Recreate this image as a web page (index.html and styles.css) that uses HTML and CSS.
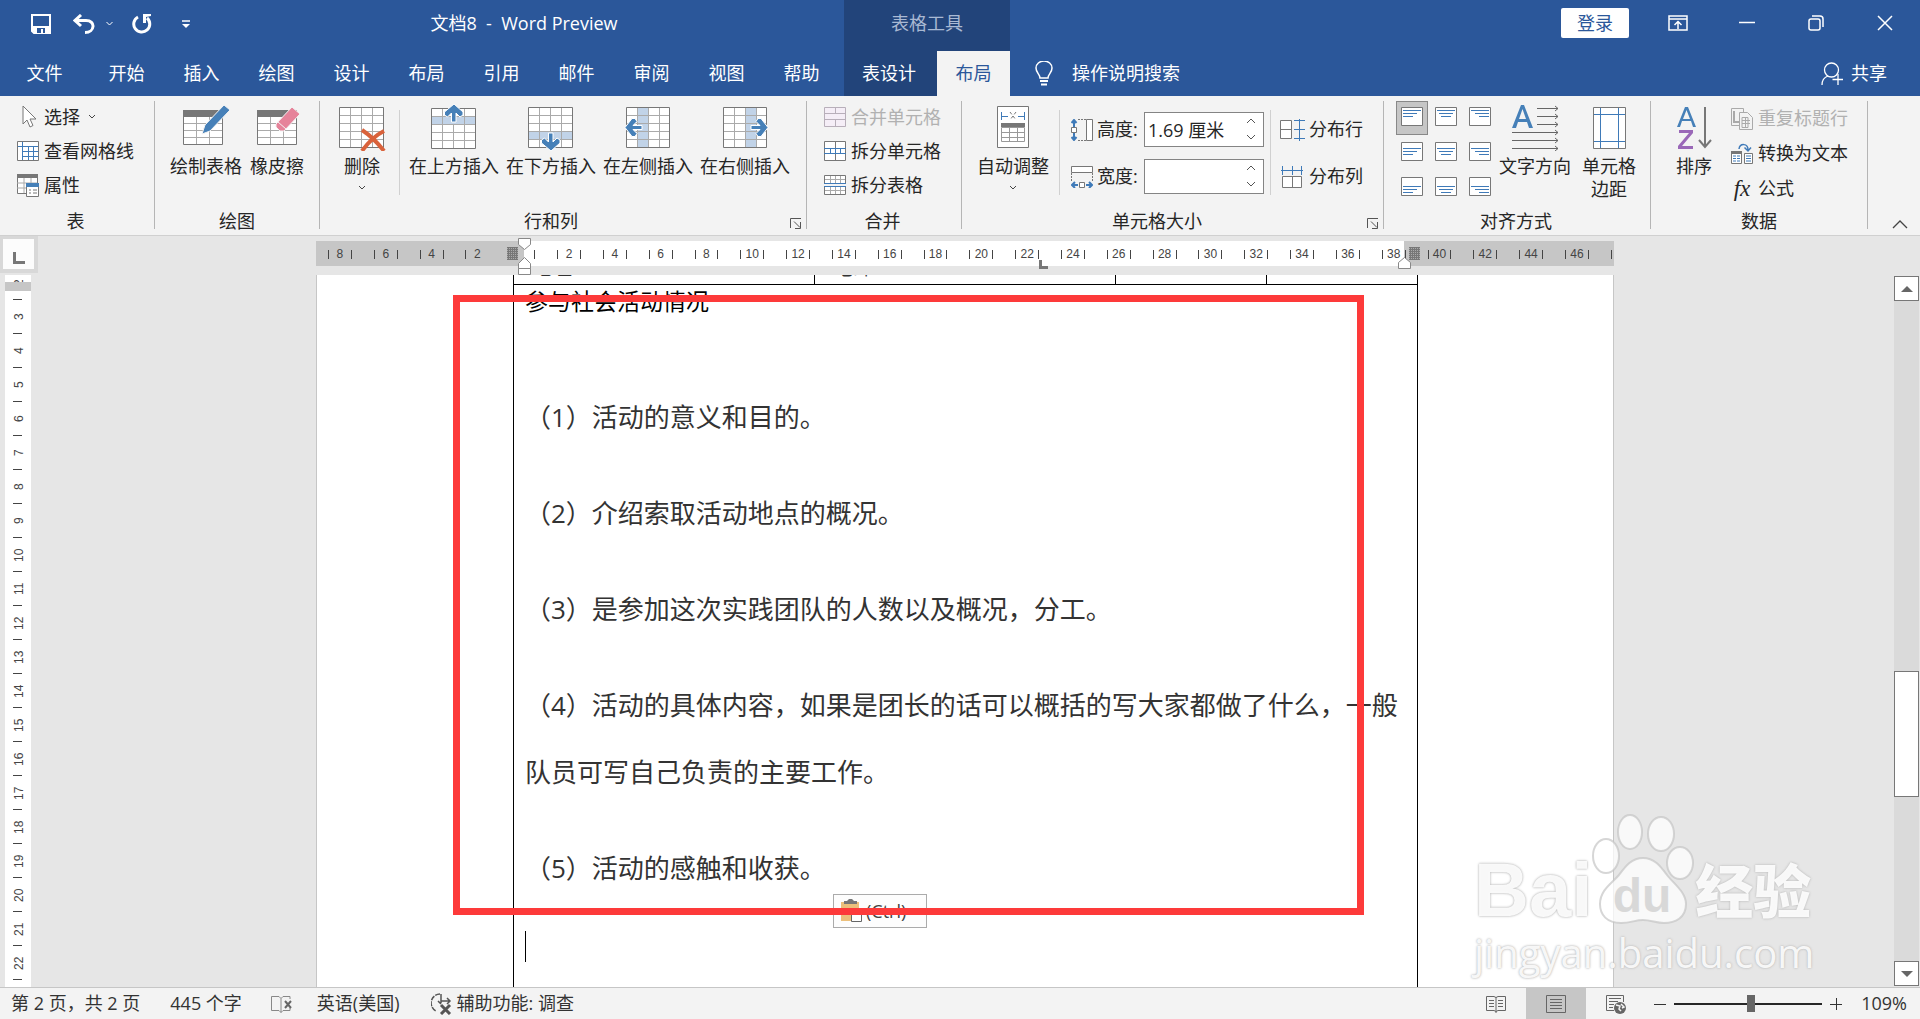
FILE: index.html
```html
<!DOCTYPE html>
<html lang="zh-CN">
<head>
    <meta charset="UTF-8">
    <title>文档8 - Word Preview</title>
    <link rel="stylesheet" href="styles.css">
</head>
<body>
    <header class="header">
        <div class="title-row">
            <div class="quick">
                <button class="q-save" aria-label="保存"><svg width="20" height="20" viewBox="0 0 20 20"><path d="M1 1h18v18H3l-2-2z" fill="none" stroke="#fff" stroke-width="2"/><path d="M2 12h16v7H4l-2-2z" fill="#fff"/><path d="M6 14h8v5h-2v-4h-2v4H6z" fill="#2b579a"/></svg></button>
                <button class="q-undo" aria-label="撤消"><svg width="22" height="20" viewBox="0 0 22 20"><path d="M8 1L2 6.500l6 5.500M3 6.500h10c10 0 9 12-1 12" fill="none" stroke="#fff" stroke-width="3"/></svg></button>
                <button class="q-down" aria-label="撤消列表"><svg width="7" height="5" viewBox="0 0 7 5"><path d="M.5 1l3 3 3-3" fill="none" stroke="#fff"/></svg></button>
                <button class="q-redo" aria-label="重复"><svg width="20" height="20" viewBox="0 0 20 20"><path d="M6 3a8 8 0 1 0 9 1" fill="none" stroke="#fff" stroke-width="3"/><path d="M11 0h8v2l-5 1v6h-3z" fill="#fff"/></svg></button>
                <button class="q-more" aria-label="自定义"><svg width="8" height="8" viewBox="0 0 8 8"><path d="M0 1h8" stroke="#fff" stroke-width="1.500"/><path d="M0 4h8L4 8z" fill="#fff"/></svg></button>
            </div>
            <div class="doc-title">文档8 &nbsp;-&nbsp; Word Preview</div>
        </div>
        <div class="context-title">表格工具</div>
        <div class="window-row">
            <button class="login">登录</button>
            <button class="win" aria-label="功能区显示选项"><svg width="20" height="16" viewBox="0 0 20 16"><path d="M1 1h18v14H1zM1 4h18" fill="none" stroke="#fff" stroke-width="1.500"/><path d="M10 14V7M6.500 10L10 6.500l3.500 3.500" fill="none" stroke="#fff" stroke-width="1.500"/></svg></button>
            <button class="win" aria-label="最小化"><svg width="16" height="16" viewBox="0 0 16 16"><path d="M0 7.500h16" stroke="#fff" stroke-width="1.500"/></svg></button>
            <button class="win" aria-label="还原"><svg width="16" height="16" viewBox="0 0 16 16"><rect x="1" y="4" width="11" height="11" rx="2" fill="none" stroke="#fff" stroke-width="1.500"/><path d="M4 1h8q3 0 3 3v8" fill="none" stroke="#fff" stroke-width="1.500"/></svg></button>
            <button class="win" aria-label="关闭"><svg width="16" height="16" viewBox="0 0 16 16"><path d="M1 1l14 14M15 1L1 15" stroke="#fff" stroke-width="1.500"/></svg></button>
        </div>
        <nav class="tabs">
            <button class="tab tab-file">文件</button>
            <button class="tab">开始</button>
            <button class="tab">插入</button>
            <button class="tab">绘图</button>
            <button class="tab">设计</button>
            <button class="tab">布局</button>
            <button class="tab">引用</button>
            <button class="tab">邮件</button>
            <button class="tab">审阅</button>
            <button class="tab">视图</button>
            <button class="tab">帮助</button>
        </nav>
        <nav class="context-tabs">
            <button class="tab">表设计</button>
            <button class="tab active">布局</button>
        </nav>
        <div class="search-row">
            <button class="tell-me"><svg width="18" height="25" viewBox="0 0 18 25"><path d="M5 17c0-4-4-5-4-10a8 7 0 0 1 16 0c0 5-4 6-4 10z" fill="none" stroke="#fff" stroke-width="1.500"/><path d="M5 20h8M6 23.500h6" stroke="#fff" stroke-width="2"/></svg>操作说明搜索</button>
            <button class="share"><svg width="23" height="24" viewBox="0 0 23 24"><circle cx="10.500" cy="8" r="7" fill="none" stroke="#fff" stroke-width="1.300"/><path d="M1 23c0-5 3-8 6-9M17 12v11M11.500 17.500H22" fill="none" stroke="#fff" stroke-width="1.300"/></svg>共享</button>
        </div>
    </header>

    <section class="ribbon">
        <div class="group g-table">
            <div class="group-body">
                <div class="stack">
                    <button class="small"><svg width="22" height="24" viewBox="0 0 22 24"><path d="M6 1v18l4-4 3 7 3-1.500-3-6.500h6z" fill="#fff" stroke="#777"/></svg>选择<svg class="chev" width="8" height="6" viewBox="0 0 8 6"><path d="M1 1l3 3 3-3" fill="none" stroke="#444"/></svg></button>
                    <button class="small"><svg width="22" height="20" viewBox="0 0 22 20"><path d="M.5 .5h21v19H.5z" fill="#fff" stroke="#777"/><path d="M1 5.500h20M5.500 10.500h16M5.500 15.500h16M5.500 1v18M11.500 5v14M16.500 5v14" stroke="#3f7ab8"/></svg>查看网格线</button>
                    <button class="small"><svg width="22" height="23" viewBox="0 0 22 23"><path d="M.5 .5h20v19H.5z" fill="#fff" stroke="#777"/><path d="M0 0h21v4H0z" fill="#777"/><path d="M0 9h20M0 14h10M7 4v15M14 4v5" stroke="#aaa"/><path d="M9.500 9.500h12v13h-12z" fill="#fff" stroke="#777"/><path d="M9 9h13v4H9z" fill="#4680b8"/><path d="M12 16h2m2 0h4M12 19h2m2 0h4" stroke="#777"/></svg>属性</button>
                </div>
            </div>
            <div class="group-label">表</div>
        </div>

        <div class="group g-draw">
            <div class="group-body">
                <button class="big"><svg width="48" height="48" viewBox="0 0 48 48"><path d="M1.500 7.500h39v34h-39z" fill="#fff" stroke="#777"/><path d="M1 7h40v7H1z" fill="#777"/><path d="M2 20.500h38M2 27.500h38M2 34.500h38M14.500 14v27M27.500 14v27" stroke="#aaa"/><path d="M20 31l3-9L42 2l6 5-20 21z" fill="#4680b8" stroke="#f3f3f3"/></svg>绘制表格</button>
                <button class="big"><svg width="48" height="48" viewBox="0 0 48 48"><path d="M4.500 7.500h39v34h-39z" fill="#fff" stroke="#777"/><path d="M4 7h40v7H4z" fill="#777"/><path d="M5 20.500h38M5 27.500h38M5 34.500h38M17.500 14v27M30.500 14v27" stroke="#aaa"/><path d="M23 21L39 4l8 7-16 17h-4l-4-4z" fill="#e6839a" stroke="#f3f3f3"/><path d="M25 19l8 7" stroke="#f3f3f3"/></svg>橡皮擦</button>
            </div>
            <div class="group-label">绘图</div>
        </div>

        <div class="group g-rows">
            <div class="group-body">
                <button class="big"><svg width="48" height="48" viewBox="0 0 48 48"><path d="M1.500 4.500h44v40h-44z" fill="#fff" stroke="#777"/><path d="M2 12.500h43M2 20.500h43M2 28.500h43M2 36.500h43M12.500 5v39M23.500 5v39M34.500 5v39" stroke="#aaa"/><path d="M24 27q12 8 22 21M46 28Q34 34 24 48" fill="none" stroke="#d9623b" stroke-width="4"/></svg>删除<svg class="chev" width="8" height="6" viewBox="0 0 8 6"><path d="M1 1l3 3 3-3" fill="none" stroke="#444"/></svg></button>
                <span class="thin-line line-del"></span>
                <div class="insert-list">
                    <button class="big"><svg width="48" height="48" viewBox="0 0 48 48"><path d="M1.500 5.500h44v40h-44z" fill="#fff" stroke="#777"/><path d="M2 13h43v8H2z" fill="#c1d3e8"/><path d="M2 13.500h43M2 21.500h43M2 29.500h43M2 37.500h43M12.500 6v39M23.500 6v7M23.500 21v24M34.500 6v39" stroke="#aaa"/><path d="M21.500 19v-9l-4 4-3-2V9L24 1l9 8v3l-3 2-4-4v9z" fill="#4680b8" stroke="#fff"/></svg>在上方插入</button>
                    <button class="big"><svg width="48" height="48" viewBox="0 0 48 48"><path d="M1.500 4.500h44v40h-44z" fill="#fff" stroke="#777"/><path d="M2 28h43v8H2z" fill="#c1d3e8"/><path d="M2 12.500h43M2 20.500h43M2 28.500h43M2 36.500h43M12.500 5v39M23.500 5v23M34.500 5v39" stroke="#aaa"/><path d="M21.500 30v9l-4-4-3 2v3l9.500 8 9-8v-3l-3-2-4 4v-9z" fill="#4680b8" stroke="#fff"/></svg>在下方插入</button>
                    <button class="big"><svg width="48" height="48" viewBox="0 0 48 48"><path d="M2.500 4.500h43v40h-43z" fill="#fff" stroke="#777"/><path d="M13 5h11v39H13z" fill="#c1d3e8"/><path d="M3 12.500h42M3 20.500h42M3 28.500h42M3 36.500h42M13.500 5v39M24.500 5v39M35.500 5v39" stroke="#aaa"/><path d="M18 22.500H9l4-4-2-3H8l-7 9 7 9h3l2-3-4-4h9z" fill="#4680b8" stroke="#fff"/></svg>在左侧插入</button>
                    <button class="big"><svg width="48" height="48" viewBox="0 0 48 48"><path d="M2.500 4.500h43v40h-43z" fill="#fff" stroke="#777"/><path d="M24 5h11v39H24z" fill="#c1d3e8"/><path d="M3 12.500h42M3 20.500h42M3 28.500h42M3 36.500h42M13.500 5v39M24.500 5v39M35.500 5v39" stroke="#aaa"/><path d="M30 22.500h9l-4-4 2-3h3l7 9-7 9h-3l-2-3 4-4h-9z" fill="#4680b8" stroke="#fff"/></svg>在右侧插入</button>
                </div>
            </div>
            <div class="group-label">行和列</div>
            <button class="launcher" aria-label="表格属性"><svg width="12" height="11" viewBox="0 0 12 11"><path d="M.5 10V.5H11M4 3.500l6 6M10.500 4v6.500H5" fill="none" stroke="#555"/></svg></button>
        </div>

        <div class="group g-merge">
            <div class="group-body">
                <div class="stack">
                    <button class="small" disabled><svg width="22" height="20" viewBox="0 0 22 20"><path d="M.5 .5h21v19H.5zM0 6.500h22M0 12.500h22M11.500 0v6M11.500 13v7" fill="#f5eef7" stroke="#b8afba"/></svg>合并单元格</button>
                    <button class="small"><svg width="22" height="20" viewBox="0 0 22 20"><path d="M.5 .5h21v19H.5zM11.500 0v20" fill="#fff" stroke="#777"/><path d="M1 7h20v6H1z" fill="#fff"/><path d="M0 7.500h22M0 12.500h22M6.500 8v5M11.500 8v5M16.500 8v5" stroke="#3f7ab8"/></svg>拆分单元格</button>
                    <button class="small"><svg width="22" height="20" viewBox="0 0 22 20"><path d="M.5 8V.5h21V8M.5 12v7.500h21V12" fill="#fff" stroke="#777"/><path d="M1 4.500h20M1 15.500h20M6.500 1v7M11.500 1v7M16.500 1v7M6.500 12v7M11.500 12v7M16.500 12v7" stroke="#aaa"/><path d="M0 8.500h22M0 11.500h22" stroke="#3f7ab8"/></svg>拆分表格</button>
                </div>
            </div>
            <div class="group-label">合并</div>
        </div>

        <div class="group g-size">
            <div class="group-body">
                <button class="big"><svg width="48" height="48" viewBox="0 0 48 48"><path d="M8.500 3.500h31v41h-31z" fill="#fff" stroke="#777"/><path d="M12.500 9v8M35.500 9v8M13 13.500h6M29 13.500h6" stroke="#3f7ab8"/><path d="M21 9l6 8M27 9l-6 8" stroke="#777" stroke-dasharray="3 2"/><path d="M12 20h24v4H12z" fill="#777"/><path d="M12.500 24.500h23v14h-23zM12 29.500h24M12 34.500h24M20.500 25v13M28.500 25v13" fill="none" stroke="#999"/></svg>自动调整<svg class="chev" width="8" height="6" viewBox="0 0 8 6"><path d="M1 1l3 3 3-3" fill="none" stroke="#444"/></svg></button>
                <span class="thin-line"></span>
                <div class="size-fields">
                    <div class="field">
                        <svg width="22" height="22" viewBox="0 0 22 22"><path d="M3 2v6M3 14v6M0.500 4L3 1l2.500 3M.5 18L3 21l2.500-3" fill="none" stroke="#3f7ab8" stroke-width="2"/><path d="M.5 8.500h5v5h-5zM15.500 .5h6v21h-6z" fill="#fff" stroke="#777"/><path d="M7 .5h8M7 21.500h8" stroke="#777" stroke-dasharray="2 1"/></svg>
                        <label for="row-height">高度:</label>
                        <span class="spin"><input id="row-height" type="text" value="1.69 厘米"><svg width="10" height="24" viewBox="0 0 10 24"><path d="M1 6l4-4 4 4M1 18l4 4 4-4" fill="none" stroke="#555"/></svg></span>
                    </div>
                    <div class="field">
                        <svg width="22" height="22" viewBox="0 0 22 22"><path d="M.5 .5h21v6H.5zM8.500 16.500h5v5h-5z" fill="#fff" stroke="#777"/><path d="M.5 7v8M21.500 7v8" stroke="#777" stroke-dasharray="2 1"/><path d="M1 19h6M15 19h6M4 16l-3 3 3 3M18 16l3 3-3 3" fill="none" stroke="#3f7ab8" stroke-width="2"/></svg>
                        <label for="col-width">宽度:</label>
                        <span class="spin"><input id="col-width" type="text" value=""><svg width="10" height="24" viewBox="0 0 10 24"><path d="M1 6l4-4 4 4M1 18l4 4 4-4" fill="none" stroke="#555"/></svg></span>
                    </div>
                </div>
                <span class="thin-line"></span>
                <div class="dist-list">
                    <button class="dist"><svg width="25" height="22" viewBox="0 0 25 22"><path d="M.5 1.500h11v18H.5zM0 10.500h12" fill="#fff" stroke="#777"/><path d="M19.500 0v22M14 1.500h11M14 10.500h11M14 19.500h11" stroke="#3f7ab8"/></svg>分布行</button>
                    <button class="dist"><svg width="25" height="22" viewBox="0 0 25 22"><path d="M2.500 10.500h19v11h-19zM12.500 10v12" fill="#fff" stroke="#777"/><path d="M1 4.500h22M2.500 0v9M12.500 0v9M21.500 0v9" stroke="#3f7ab8"/></svg>分布列</button>
                </div>
            </div>
            <div class="group-label">单元格大小</div>
            <button class="launcher" aria-label="表格属性"><svg width="12" height="11" viewBox="0 0 12 11"><path d="M.5 10V.5H11M4 3.500l6 6M10.500 4v6.500H5" fill="none" stroke="#555"/></svg></button>
        </div>

        <div class="group g-align">
            <div class="group-body">
                <div class="align-grid" id="alignGrid"></div>
                <button class="big"><svg width="48" height="48" viewBox="0 0 48 48"><path d="M1 25L10 2h3l9 23h-4l-2-6H7l-2 6zM8 16h7L11.500 6z" fill="#4680b8"/><path d="M26 5.500h21M26 13.500h21M26 21.500h21M1 29.500h46M1 37.500h46M1 45.500h46M44 3l3 2.500-3 2.500M44 11l3 2.500-3 2.500M44 19l3 2.500-3 2.500M44 27l3 2.500-3 2.500M44 35l3 2.500-3 2.500M44 43l3 2.500-3 2.500" fill="none" stroke="#666"/></svg>文字方向</button>
                <button class="big"><svg width="48" height="48" viewBox="0 0 48 48"><path d="M8.500 4.500h32v41h-32z" fill="#fff" stroke="#777"/><path d="M15.500 5v40M33.500 5v40M9 11.500h31M9 38.500h31" stroke="#3f7ab8"/></svg>单元格<br>边距</button>
            </div>
            <div class="group-label">对齐方式</div>
        </div>

        <div class="group g-data">
            <div class="group-body">
                <button class="big"><svg width="48" height="48" viewBox="0 0 48 48"><path d="M7 24L15 4h3l8 20h-3l-2-6h-9l-2 6zM13 16h7L16.500 7z" fill="#4680b8"/><path d="M9 27h14v3L12 43h11v3H8v-3l11-13H9z" fill="#9a68b8"/><path d="M35 4v40M29 37l6 7 6-7" fill="none" stroke="#777" stroke-width="2"/></svg>排序</button>
                <div class="stack">
                    <button class="small" disabled><svg width="22" height="22" viewBox="0 0 22 22"><path d="M.5 .5h12v17H.5z" fill="#f3f3f3" stroke="#aaa"/><path d="M3 3v11h5" fill="none" stroke="#aaa" stroke-width="2"/><path d="M8.500 4.500h8l5 5v12h-13z" fill="#f3f3f3" stroke="#aaa"/><path d="M11 9.500h6v10h-6zM11 12.500h8M11 15.500h8M14.500 9v10" fill="none" stroke="#aaa"/></svg>重复标题行</button>
                    <button class="small"><svg width="22" height="22" viewBox="0 0 22 22"><path d="M.5 8.500h10v12H.5zM13.500 10.500h8v10h-8z" fill="#fff" stroke="#777"/><path d="M0 8h11v3H0z" fill="#777"/><path d="M2 13h3m1 0h3M2 15.500h3m1 0h3M2 18h3m1 0h3M15 13h5M15 15.500h5M15 18h5" stroke="#3f7ab8"/><path d="M8 6c1-6 9-6 9 1M13.500 4.500L17 8l3-3.500" fill="none" stroke="#3f7ab8" stroke-width="1.500"/></svg>转换为文本</button>
                    <button class="small"><span class="fx">fx</span>公式</button>
                </div>
            </div>
            <div class="group-label">数据</div>
        </div>
        <button class="collapse" aria-label="折叠功能区"><svg width="16" height="9" viewBox="0 0 16 9"><path d="M1 8l7-7 7 7" fill="none" stroke="#444" stroke-width="1.300"/></svg></button>
    </section>

    <main class="workspace">
        <div class="tab-corner"><button class="tab-type" aria-label="制表符"></button></div>
        <div class="ruler-row">
            <div class="ruler">
                <div class="ruler-body"></div>
                <div class="ruler-units" id="hUnits"></div>
                <span class="hatch hatch-left"></span>
                <span class="hatch hatch-right"></span>
                <span class="tab-stop"></span>
                <svg class="indent indent-left" width="13" height="37" viewBox="0 0 13 37"><path d="M.5 .5h12v6l-6 5-6-5zM.5 30.500v-5l6-6 6 6v5zM.5 30.500h12v6H.5z" fill="#fff" stroke="#888"/></svg>
                <svg class="indent indent-right" width="13" height="12" viewBox="0 0 13 12"><path d="M.5 11.500v-6l6-5 6 5v6z" fill="#fff" stroke="#888"/></svg>
            </div>
        </div>
        <div class="v-ruler" id="vUnits"><span class="v-band"></span></div>
        <div class="canvas">
            <article class="page">
                <table class="doc-table">
                    <colgroup><col class="col-a"><col class="col-b"><col class="col-c"><col></colgroup>
                    <tr class="cut-row">
                        <td><div class="cut">地址</div></td>
                        <td><div class="cut">电邮</div></td>
                        <td></td>
                        <td></td>
                    </tr>
                    <tr>
                        <td colspan="4" class="content">
                            <h2>参与社会活动情况</h2>
                            <p>（1）活动的意义和目的。</p>
                            <p>（2）介绍索取活动地点的概况。</p>
                            <p>（3）是参加这次实践团队的人数以及概况，分工。</p>
                            <p>（4）活动的具体内容，如果是团长的话可以概括的写大家都做了什么，一般队员可写自己负责的主要工作。</p>
                            <p>（5）活动的感触和收获。</p>
                            <div class="caret"></div>
                        </td>
                    </tr>
                </table>
                <button class="paste"><svg width="22" height="24" viewBox="0 0 22 24"><path d="M0 3h18v19H0z" fill="#ecc07c"/><path d="M3 5V2h3l2-2h3l2 2h3v3z" fill="#777"/><path d="M10.500 9.500h10v13h-10z" fill="#fff" stroke="#666"/></svg>(Ctrl)</button>
                <div class="mark"></div>
            </article>
            <div class="watermark">
                <div class="wm-top">
                    <span class="wm-bai">Bai</span>
                    <svg class="wm-paw" width="106" height="112" viewBox="0 0 106 112"><g fill="#fff" fill-opacity=".75" stroke="#c4c4c4" stroke-opacity=".7" stroke-width="2"><ellipse cx="17" cy="43" rx="13" ry="17"/><ellipse cx="41" cy="19" rx="12" ry="17"/><ellipse cx="72" cy="21" rx="13" ry="17"/><ellipse cx="91" cy="50" rx="13" ry="16"/><path d="M54 45c12 0 18 9 24 17s19 17 19 29c0 14-11 19-22 19-8 0-13-3-21-3s-12 3-22 3c-14 0-21-8-21-19 0-14 12-21 19-29 6-8 12-17 24-17z"/></g><text x="53" y="99" text-anchor="middle" class="wm-du">du</text></svg>
                    <span class="wm-cn">经验</span>
                </div>
                <div class="wm-url">jingyan.baidu.com</div>
            </div>
        </div>
        <div class="scrollbar">
            <button aria-label="向上"><svg width="12" height="6" viewBox="0 0 12 6"><path d="M0 6l6-6 6 6z" fill="#666"/></svg></button>
            <div class="scroll-track"><div class="scroll-thumb"></div></div>
            <button aria-label="向下"><svg width="12" height="6" viewBox="0 0 12 6"><path d="M0 0l6 6 6-6z" fill="#666"/></svg></button>
        </div>
    </main>

    <footer class="status">
        <span class="st-page">第 2 页，共 2 页</span>
        <span class="st-words">445 个字</span>
        <svg class="st-proof" width="22" height="18" viewBox="0 0 22 18"><path d="M.5 1.500H8l2 2v14l-2-2H.5zM10 3.500l2-2h7V4M19 13v2.500h-7l-2 2" fill="none" stroke="#888"/><path d="M14 6l6 7M20 6l-6 7" stroke="#666" stroke-width="2"/></svg>
        <span class="st-lang">英语(美国)</span>
        <svg class="st-acc" width="21" height="22" viewBox="0 0 21 22"><path d="M9 1A9 9 0 0 0 5 18" fill="none" stroke="#555" stroke-width="1.500" stroke-dasharray="5 1"/><path d="M10 1v9M7 8l3 3M10 8h9M16 5l3 3-3 3" fill="none" stroke="#555" stroke-width="1.500"/><path d="M10 12l9 9M19 12l-9 9" stroke="#555" stroke-width="3"/></svg>
        <span>辅助功能: 调查</span>
        <div class="st-right">
            <button class="view" aria-label="阅读视图"><svg width="20" height="18" viewBox="0 0 20 18"><path d="M.5 1.500H8l2 1 2-1h7.500v14H12l-2 1-2-1H.5zM10 2v16M3 5.500h5M3 8.500h5M3 11.500h5M12 5.500h5M12 8.500h5M12 11.500h5" fill="none" stroke="#666"/></svg></button>
            <button class="view current" aria-label="页面视图"><svg width="20" height="18" viewBox="0 0 20 18"><path d="M.5 .5h19v17H.5zM4 4.500h12M4 7.500h12M4 10.500h12M4 13.500h12" fill="none" stroke="#666"/></svg></button>
            <button class="view" aria-label="Web 版式视图"><svg width="20" height="20" viewBox="0 0 20 20"><path d="M8 16.500H.5V1.500h17V8M3 4.500h12M3 7.500h9M3 10.500h5M3 13.500h4" fill="none" stroke="#666"/><circle cx="14" cy="14" r="6" fill="#666"/><path d="M10 11l4 1-1 3 2 2M15 10l3 3-2 1" fill="none" stroke="#f3f3f3" stroke-width="1.500"/></svg></button>
            <button class="zoom-btn" aria-label="缩小"><svg width="12" height="12" viewBox="0 0 12 12"><path d="M0 6.500h12" stroke="#333"/></svg></button>
            <input class="zoom" type="range" min="0" max="100" value="52" aria-label="缩放">
            <button class="zoom-btn" aria-label="放大"><svg width="12" height="12" viewBox="0 0 12 12"><path d="M0 6.500h12M6.500 0v12" stroke="#333"/></svg></button>
            <span class="zoom-value">109%</span>
        </div>
    </footer>
    <script src="script.js"></script>
</body>
</html>
```
FILE: styles.css
```css
* {
    box-sizing: border-box;
}
body {
    margin: 0;
    height: 100vh;
    display: flex;
    flex-direction: column;
    overflow: hidden;
    font-family: "Open Sans", "Noto Sans CJK SC", sans-serif;
    font-size: 18px;
    line-height: 23px;
    color: #262626;
    background-color: #e6e6e6;
}
button {
    padding: 0;
    border: none;
    background: none;
    font: inherit;
    color: inherit;
    white-space: nowrap;
    cursor: pointer;
}
svg {
    display: block;
    flex-shrink: 0;
}

/* title bar and tabs */
.header {
    display: grid;
    grid-template-columns: auto auto 1fr;
    grid-template-rows: 51px 45px;
    background-color: #2b579a;
    color: #fff;
}
.title-row {
    display: flex;
    align-items: center;
    padding-bottom: 4px;
}
.quick {
    display: flex;
    align-items: center;
    padding-left: 31px;
}
.q-save {
    margin-right: 22px;
}
.q-undo {
    margin-right: 11px;
}
.q-down {
    margin-right: 19px;
}
.q-redo {
    margin-right: 30px;
}
.doc-title {
    flex: 1;
    padding-left: 14px;
    text-align: center;
}
.context-title {
    display: flex;
    align-items: center;
    justify-content: center;
    padding-bottom: 4px;
    background-color: #22447a;
    color: #a9b9d3;
}
.window-row {
    display: flex;
    align-items: center;
    justify-content: flex-end;
    padding: 0 1px 5px 0;
}
.login {
    width: 68px;
    height: 30px;
    margin-right: 14px;
    border-radius: 2px;
    background-color: #fff;
    color: #2b579a;
}
.win {
    width: 69px;
    height: 46px;
    display: flex;
    align-items: center;
    justify-content: center;
}
.tabs {
    display: flex;
    padding-right: 5px;
}
.tab {
    min-width: 75px;
    padding: 0 17px;
}
.tab-file {
    width: 89px;
}
.context-tabs {
    display: flex;
    background-color: #22447a;
}
.context-tabs .tab {
    min-width: 73px;
    padding: 0 21px 0 18px;
}
.context-tabs .active {
    padding: 0 18px;
    background-color: #f3f3f3;
    color: #2b579a;
}
.search-row {
    display: flex;
    align-items: center;
    justify-content: space-between;
    padding: 0 33px 0 25px;
}
.tell-me {
    display: flex;
    align-items: center;
    gap: 19px;
}
.share {
    display: flex;
    align-items: center;
    gap: 7px;
}

/* ribbon */
.ribbon {
    display: flex;
    height: 140px;
    padding: 5px 0 6px;
    background-color: #f3f3f3;
    border-bottom: 1px solid #d0d0d0;
}
.group {
    position: relative;
    display: flex;
    flex-direction: column;
    border-right: 1px solid #b5b5b5;
}
.group-body {
    display: flex;
    flex: 1;
}
.group-label {
    line-height: 16px;
    text-align: center;
}
.g-rows .group-label, .g-size .group-label {
    padding-right: 26px;
}
.launcher {
    position: absolute;
    right: 4px;
    bottom: 0;
}
.big {
    display: flex;
    flex-direction: column;
    align-items: center;
    align-self: flex-start;
    padding-top: 2px;
}
.big > svg:first-child {
    margin-bottom: 4px;
}
.big .chev {
    margin-top: 7px;
}
.stack {
    display: flex;
    flex-direction: column;
    margin-top: -1px;
}
.small {
    display: flex;
    align-items: center;
    gap: 5px;
    height: 34px;
}
.small:disabled {
    color: #b1b1b1;
}
.small .chev {
    margin-left: 3px;
}
.thin-line {
    width: 1px;
    height: 85px;
    margin-top: 9px;
    background-color: #d0d0d0;
}
.g-table {
    padding: 0 20px 0 17px;
}
.g-draw {
    padding: 0 15px;
}
.g-draw .group-body {
    gap: 8px;
}
.g-rows {
    padding: 0 16px 0 18px;
}
.line-del {
    margin-left: 13px;
}
.insert-list {
    display: flex;
    gap: 7px;
    padding-left: 9px;
}
.g-merge {
    padding: 0 20px 0 17px;
}
.g-size {
    padding: 0 20px 0 15px;
}
.g-size .thin-line {
    margin-left: 10px;
}
.size-fields {
    display: flex;
    flex-direction: column;
    gap: 12px;
    padding: 11px 0 0 11px;
}
.g-size .size-fields + .thin-line {
    margin-left: 6px;
}
.field {
    display: flex;
    align-items: center;
    gap: 4px;
}
.field label {
    width: 43px;
}
.spin {
    position: relative;
}
.spin input {
    display: block;
    width: 120px;
    height: 35px;
    padding: 0 3px 2px;
    border: 1px solid #848484;
    background-color: #fff;
    font: inherit;
    color: inherit;
}
.spin svg {
    position: absolute;
    right: 8px;
    top: 5px;
}
.dist-list {
    display: flex;
    flex-direction: column;
    gap: 24px;
    padding: 17px 0 0 9px;
}
.dist {
    display: flex;
    align-items: center;
    gap: 4px;
}
.g-align {
    padding: 0 14px 0 12px;
}
.align-grid {
    display: grid;
    grid-template-columns: repeat(3, 34px);
    grid-auto-rows: 35px;
    margin-right: 1px;
}
.align {
    width: 32px;
    height: 34px;
    display: flex;
    align-items: center;
    justify-content: center;
    padding-bottom: 3px;
    border: 1px solid transparent;
}
.align.selected {
    background-color: #c6c6c6;
    border-color: #888;
}
.g-align .big + .big {
    margin-left: 11px;
}
.g-data {
    padding: 0 19px;
}
.g-data .big {
    margin-right: 13px;
}
.g-data .stack {
    margin-top: 0;
}
.g-data .small {
    height: 35px;
}
.fx {
    width: 22px;
    font-family: "Liberation Serif", serif;
    font-size: 23px;
    font-style: italic;
}
.collapse {
    align-self: flex-end;
    margin: 0 12px 0 auto;
}

/* document area */
.workspace {
    flex: 1;
    min-height: 0;
    display: grid;
    grid-template-columns: 38px 1fr 28px;
    grid-template-rows: 39px 1fr;
}
.tab-corner {
    height: 37px;
    padding: 3px;
    background-color: #d8d8d8;
}
.tab-type {
    position: relative;
    width: 31px;
    height: 30px;
    background-color: #fcfcfc;
}
.tab-type::after, .tab-stop {
    content: "";
    position: absolute;
    width: 9px;
    height: 9px;
    border-left: 3px solid #777;
    border-bottom: 3px solid #777;
}
.tab-type::after {
    left: 10px;
    top: 13px;
}
.ruler-row {
    grid-column: 2 / 4;
    padding: 5px 28px 0 0;
}
.ruler {
    position: relative;
    width: 1298px;
    height: 25px;
    margin: 0 auto;
    background-color: #c6c6c6;
    font-family: "Liberation Sans", Arial, sans-serif;
    font-size: 12px;
    color: #444;
}
.ruler-body {
    position: absolute;
    left: 208px;
    right: 210px;
    height: 25px;
    background-color: #fff;
}
.ruler-units {
    position: relative;
    display: flex;
    height: 25px;
    padding: 2px 2px 0 12px;
    align-items: center;
}
.unit {
    flex: 1 1 0;
    height: 9px;
    border-left: 1px solid #444;
    line-height: 9px;
    text-align: center;
}
.unit.blank {
    border-left-color: transparent;
}
.unit:last-child {
    border-right: 1px solid #444;
}
.hatch {
    position: absolute;
    top: 6px;
    width: 11px;
    height: 13px;
    background: repeating-linear-gradient(90deg, transparent 0 1px, #777 1px 2px), repeating-linear-gradient(0deg, #777 0 1px, #aaa 1px 2px);
}
.hatch-left {
    left: 191px;
}
.hatch-right {
    right: 194px;
}
.tab-stop {
    left: 723px;
    top: 19px;
}
.indent {
    position: absolute;
}
.indent-left {
    left: 202px;
    top: -3px;
}
.indent-right {
    right: 203px;
    top: 16px;
}
.v-ruler {
    position: relative;
    width: 26px;
    margin-left: 5px;
    overflow: hidden;
    background-color: #fff;
    font-family: "Liberation Sans", Arial, sans-serif;
    font-size: 12px;
    color: #444;
}
.v-unit {
    display: flex;
    align-items: center;
    justify-content: center;
    width: 26px;
    height: 34px;
    padding-right: 2px;
    line-height: 22px;
    writing-mode: vertical-rl;
    transform: rotate(180deg);
    background: linear-gradient(#444, #444) center top / 9px 1px no-repeat;
}
.v-unit:nth-child(2) {
    margin-top: -9px;
}
.v-band {
    position: absolute;
    z-index: 1;
    top: 7px;
    left: 0;
    width: 26px;
    height: 9px;
    background-color: #c6c6c6;
}
.canvas {
    position: relative;
    overflow: hidden;
}
.page {
    position: relative;
    width: 1298px;
    height: 100%;
    margin: 0 auto;
    padding: 0 196px;
    background-color: #fff;
    border-left: 1px solid #c6c6c6;
    border-right: 1px solid #c6c6c6;
}
.doc-table {
    width: 905px;
    height: 760px;
    table-layout: fixed;
    border-collapse: collapse;
    color: #333;
}
.doc-table td {
    padding: 0 11px;
    border: 1px solid #000;
    vertical-align: top;
}
.doc-table .cut-row td {
    height: 9px;
    border-top: none;
}
/* only the feet of the scrolled-off row stay visible */
.cut {
    display: flex;
    align-items: flex-end;
    height: 3px;
    padding-left: 7px;
    overflow: hidden;
    font-size: 20px;
    line-height: 20px;
}
.col-a {
    width: 301px;
}
.col-b {
    width: 301px;
}
.col-c {
    width: 151px;
}
.content h2 {
    margin: 0 0 66px;
    font-size: 23px;
    font-weight: 400;
    line-height: 33px;
    color: #000;
}
.content p {
    margin: 0 0 29px;
    font-size: 26px;
    line-height: 67px;
}
.caret {
    width: 1px;
    height: 31px;
    background-color: #000;
}
.paste {
    position: absolute;
    left: 516px;
    top: 619px;
    display: flex;
    align-items: center;
    gap: 3px;
    width: 94px;
    height: 34px;
    padding-left: 7px;
    border: 1px solid #ababab;
    background-color: #fdfdfd;
    color: #444;
}
/* red highlight frame over the page */
.mark {
    position: absolute;
    left: 136px;
    top: 20px;
    width: 911px;
    height: 620px;
    border: 7px solid #fd3a3a;
}
.watermark {
    position: absolute;
    right: 72px;
    bottom: 6px;
    width: 346px;
    color: rgba(255, 255, 255, 0.9);
    text-shadow: 0 0 2px #bbb, 0 0 3px #ccc;
    white-space: nowrap;
}
.wm-top {
    display: flex;
    align-items: flex-end;
    height: 112px;
}
.wm-bai {
    font-family: "Liberation Sans", Arial, sans-serif;
    font-size: 76px;
    font-weight: 700;
    line-height: 70px;
}
.wm-paw {
    margin: 0 0 0 -3px;
}
.wm-du {
    font-family: "Liberation Sans", Arial, sans-serif;
    font-size: 48px;
    font-weight: 700;
    fill: #d8d8d8;
    text-shadow: none;
}
.wm-cn {
    font-size: 58px;
    font-weight: 900;
    line-height: 68px;
}
.wm-url {
    font-size: 40px;
    line-height: 56px;
}
.scrollbar {
    display: flex;
    flex-direction: column;
    padding: 1px 1px 1px 2px;
}
.scrollbar button {
    display: flex;
    align-items: center;
    justify-content: center;
    height: 25px;
    border: 1px solid #777;
    background-color: #fff;
}
.scroll-track {
    flex: 1;
    display: flex;
    flex-direction: column;
    background-color: #dadada;
}
.scroll-track::before {
    content: "";
    flex: 371;
}
.scroll-track::after {
    content: "";
    flex: 165;
}
.scroll-thumb {
    flex: 124;
    border: 1px solid #777;
    background-color: #fff;
}

/* status bar */
.status {
    display: flex;
    align-items: center;
    height: 32px;
    padding-left: 11px;
    border-top: 1px solid #c6c6c6;
    background-color: #f3f3f3;
    color: #333;
}
.st-page {
    margin-right: 30px;
}
.st-words {
    margin-right: 29px;
}
.st-proof {
    margin-right: 24px;
}
.st-lang {
    margin-right: 32px;
}
.st-acc {
    margin-right: 4px;
}
.st-right {
    display: flex;
    align-items: center;
    height: 31px;
    margin-left: auto;
    padding-right: 13px;
}
.view {
    display: flex;
    align-items: center;
    justify-content: center;
    width: 60px;
    height: 31px;
}
.view.current {
    background-color: #c6c6c6;
}
.zoom-btn {
    margin: 0 8px;
}
.zoom {
    appearance: none;
    width: 148px;
    height: 17px;
    margin: 0;
    background: linear-gradient(#262626, #262626) center / 100% 2px no-repeat;
}
.zoom::-webkit-slider-thumb {
    appearance: none;
    width: 8px;
    height: 17px;
    background-color: #666;
}
.zoom-value {
    margin-left: 11px;
}
```
FILE: script.js
```js
// horizontal ruler, two units between numbers
const hUnits = document.getElementById('hUnits');
for (let n = -8; n <= 47; n++) {
    const unit = document.createElement('span');
    unit.className = n === -1 || n === 0 ? 'unit blank' : 'unit';
    unit.textContent = n % 2 === 0 && n !== 0 ? Math.abs(n) : '';
    hUnits.appendChild(unit);
}

// vertical ruler
const vUnits = document.getElementById('vUnits');
for (let n = 2; n <= 22; n++) {
    const unit = document.createElement('span');
    unit.className = 'v-unit';
    unit.textContent = n;
    vUnits.appendChild(unit);
}

// cell alignment buttons: lines sit at the top, middle or bottom of the icon
const alignGrid = document.getElementById('alignGrid');
const names = ['靠上左对齐', '靠上居中', '靠上右对齐', '中部左对齐', '水平居中', '中部右对齐', '靠下左对齐', '靠下居中', '靠下右对齐'];
names.forEach((name, i) => {
    const top = [3.5, 6.5, 9.5][Math.floor(i / 3)];
    const col = i % 3;
    const lines = [18, 14, 10].map((w, k) => {
        const x = [2, 11 - w / 2, 20 - w][col];
        return `M${x} ${top + k * 3}h${w}`;
    }).join('');
    const button = document.createElement('button');
    button.className = i === 0 ? 'align selected' : 'align';
    button.setAttribute('aria-label', name);
    button.innerHTML = `<svg width="22" height="19" viewBox="0 0 22 19"><path d="M.5 .5h21v18H.5z" fill="#fff" stroke="#777"/><path d="${lines}" stroke="#3f7ab8"/></svg>`;
    alignGrid.appendChild(button);
});
```
